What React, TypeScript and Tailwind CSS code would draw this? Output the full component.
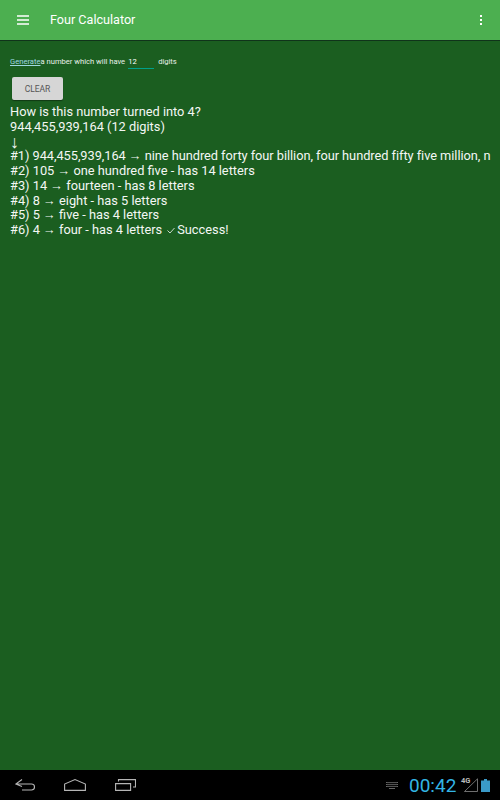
import React from "react";

const lines = [
  "#2) 105 → one hundred five - has 14 letters",
  "#3) 14 → fourteen - has 8 letters",
  "#4) 8 → eight - has 5 letters",
  "#5) 5 → five - has 4 letters",
];

const App = () => {
  return (
    <div className="w-[500px] h-[800px] flex flex-col overflow-hidden bg-[#1b5e20] font-['Roboto',sans-serif]">
      {/* toolbar */}
      <div className="h-[41px] shrink-0 flex items-center bg-[#4caf50] border-b border-[#10331a] px-[17px]">
        <svg width="12" height="10" viewBox="0 0 12 10" className="shrink-0">
          <path d="M0 1h12M0 5h12M0 9h12" stroke="#fff" strokeWidth="1.3" />
        </svg>
        <span className="ml-[21px] text-[12.6px] text-white">Four Calculator</span>
        <div className="ml-auto mr-[1px] flex flex-col gap-[2px]">
          <div className="w-[2px] h-[2px] bg-white" />
          <div className="w-[2px] h-[2px] bg-white" />
          <div className="w-[2px] h-[2px] bg-white" />
        </div>
      </div>

      {/* content */}
      <div className="flex-1 min-h-0 pl-[10px] pt-[15px]">
        <div className="flex items-start h-[13px] text-[7.6px] leading-[12px] text-[#e8f0e8]">
          <span className="underline text-[#9fd8e0]">Generate</span>
          <span>a number which will have</span>
          <span className="ml-[3px] w-[26px] h-[13px] border-b border-[#00a08a] text-white">12</span>
          <span className="ml-[4px]">digits</span>
        </div>
        <button className="block ml-[2px] mt-[8px] w-[51px] h-[23px] pt-[1px] rounded-[2px] bg-[#d6d6d6] text-[#555] text-[8.5px] shadow-[0_1px_1px_rgba(0,0,0,0.4)]">
          CLEAR
        </button>
        <div className="mt-[5px] w-[490px] text-[12.8px] leading-[14.75px] text-[#f4f7f4] whitespace-nowrap">
          <div>How is this number turned into 4?</div>
          <div>944,455,939,164 (12 digits)</div>
          <div className="text-[18px]">↓</div>
          <div className="tracking-[-0.045px]">
            #1) 944,455,939,164 → nine hundred forty four billion, four hundred fifty five million, n
          </div>
          {lines.map((line) => (
            <div key={line}>{line}</div>
          ))}
          <div className="flex items-center">
            #6) 4 → four - has 4 letters
            <svg width="8" height="7" viewBox="0 0 8 7" className="ml-[5px] mr-[2px]">
              <path d="M.5 3.500 3 6 7.500 1" fill="none" stroke="#f4f7f4" strokeWidth="0.8" />
            </svg>
            Success!
          </div>
        </div>
      </div>

      {/* system bar */}
      <div className="h-[30px] shrink-0 flex items-center bg-black">
        <svg width="20" height="12" viewBox="0 0 20 12" className="ml-[15px]">
          <path d="M7 .500.800 5 7 7.500M1 5h15.500q3 0 3 3t-3 3H7" fill="none" stroke="#b5b5b5" strokeWidth="1.100" />
        </svg>
        <svg width="22" height="12" viewBox="0 0 22 12" className="ml-[29px]">
          <path d="M.600 11.400V5L11 .600 21.400 5v6.400z" fill="none" stroke="#b5b5b5" strokeWidth="1.100" />
        </svg>
        <svg width="21" height="12" viewBox="0 0 21 12" className="ml-[29px]">
          <path d="M.600 4.600h15v6.800H.600zM3.500 2.500V.600h17V8h-2.500" fill="none" stroke="#b5b5b5" strokeWidth="1.100" />
        </svg>
        {/* keyboard */}
        <svg width="12" height="7" viewBox="0 0 12 7" className="ml-[250px]">
          <path d="M0 0h12v1H0zM0 2h12v1H0zM0 4h12v1H0zM3 6h6v1H3z" fill="#666" />
          <path d="M2 0v5M4 0v5M6 0v5M8 0v5M10 0v5" stroke="#222" strokeWidth="0.6" />
        </svg>
        <span className="ml-[11px] w-[47px] text-[19px] leading-none text-[#33b5e5] whitespace-nowrap">00:42</span>
        <div className="ml-[6px] relative w-[16px] h-[14px]">
          <svg width="16" height="14" viewBox="0 0 16 14" className="absolute left-0 top-0">
            <path d="M15.500 .800V13.500H2.500z" fill="none" stroke="#8a8a8a" strokeWidth="0.800" />
          </svg>
          <span className="absolute left-[-1px] top-[-1px] text-[7.5px] leading-[8px] font-bold text-[#bbb]">4G</span>
        </div>
        <svg width="9" height="13" viewBox="0 0 9 13" className="ml-[3px]">
          <path d="M3 0h3v1.500h3V13H0V1.500h3z" fill="#3a9ac8" />
        </svg>
      </div>
    </div>
  );
};

export default App;
